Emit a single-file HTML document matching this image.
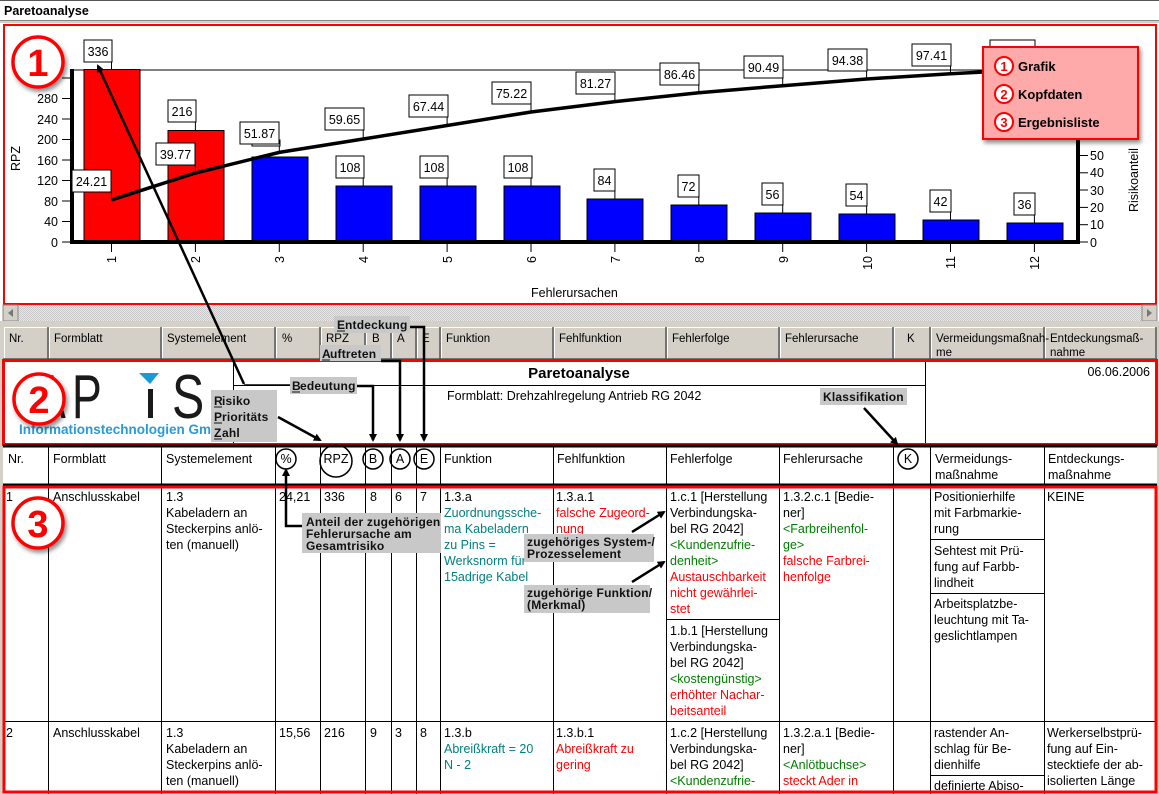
<!DOCTYPE html>
<html><head><meta charset="utf-8"><style>
html,body{margin:0;padding:0;background:#fff;}
#w{position:relative;width:1159px;height:794px;overflow:hidden;background:#fff;}
svg{position:absolute;left:0;top:0;}
text{font-family:"Liberation Sans",sans-serif;}
.t{font-size:12.5px;fill:#000;}
.tl{fill:#008080;}.rd{fill:#f00;}.gr{fill:#008000;}
.ann{font-size:12px;font-weight:bold;fill:#111;letter-spacing:0.2px;}
</style></head><body><div id="w">
<svg width="1159" height="794" viewBox="0 0 1159 794">
<defs>
<filter id="sh" x="-30%" y="-30%" width="160%" height="160%"><feDropShadow dx="2" dy="3" stdDeviation="2" flood-color="#000" flood-opacity="0.45"/></filter>
<marker id="ar" markerWidth="8" markerHeight="8" refX="6" refY="4" orient="auto" markerUnits="userSpaceOnUse"><path d="M0,0 L8,4 L0,8 z" fill="#000"/></marker>
<pattern id="hatch" width="2" height="2" patternUnits="userSpaceOnUse"><rect width="2" height="2" fill="#e8e8e8"/><rect width="1" height="1" fill="#c8c8c8"/><rect x="1" y="1" width="1" height="1" fill="#c8c8c8"/></pattern>
</defs>
<rect x="0" y="0" width="1159" height="1" fill="#555"/>
<text x="4" y="15" style="font-size:12.5px;font-weight:bold">Paretoanalyse</text>
<rect x="0" y="20" width="1159" height="1" fill="#888"/>
<rect x="0" y="21" width="1159" height="2" fill="#d4d0c8"/>
<rect x="4" y="25" width="1152" height="279" fill="#fff" stroke="#f00" stroke-width="2"/>
<line x1="72" y1="70" x2="1078" y2="70" stroke="#000" stroke-width="1"/>
<g stroke="#000" stroke-width="1">
<rect x="84" y="69.5" width="56" height="172.5" fill="#f00"/>
<rect x="168" y="130.5" width="56" height="111.5" fill="#f00"/>
<rect x="252" y="157" width="56" height="85" fill="#00f"/>
<rect x="336" y="186" width="56" height="56" fill="#00f"/>
<rect x="420" y="186" width="56" height="56" fill="#00f"/>
<rect x="504" y="186" width="56" height="56" fill="#00f"/>
<rect x="587" y="199" width="56" height="43" fill="#00f"/>
<rect x="671" y="205" width="56" height="37" fill="#00f"/>
<rect x="755" y="213" width="56" height="29" fill="#00f"/>
<rect x="839" y="214" width="56" height="28" fill="#00f"/>
<rect x="923" y="220" width="56" height="22" fill="#00f"/>
<rect x="1007" y="223" width="56" height="19" fill="#00f"/>
</g>
<rect x="70" y="69" width="4" height="175" fill="#000"/>
<rect x="70" y="240" width="1010" height="4" fill="#000"/>
<rect x="1076" y="69" width="4" height="175" fill="#000"/>
<g stroke="#000" stroke-width="1">
<line x1="62" y1="242" x2="70" y2="242"/><line x1="62" y1="221.5" x2="70" y2="221.5"/><line x1="62" y1="201" x2="70" y2="201"/><line x1="62" y1="180.5" x2="70" y2="180.5"/><line x1="62" y1="160" x2="70" y2="160"/><line x1="62" y1="139.5" x2="70" y2="139.5"/><line x1="62" y1="119" x2="70" y2="119"/><line x1="62" y1="98.5" x2="70" y2="98.5"/><line x1="62" y1="78" x2="70" y2="78"/>
<line x1="1080" y1="242" x2="1088" y2="242"/><line x1="1080" y1="224.7" x2="1088" y2="224.7"/><line x1="1080" y1="207.4" x2="1088" y2="207.4"/><line x1="1080" y1="190" x2="1088" y2="190"/><line x1="1080" y1="172.8" x2="1088" y2="172.8"/><line x1="1080" y1="155.5" x2="1088" y2="155.5"/><line x1="1080" y1="138" x2="1088" y2="138"/>
<line x1="111.5" y1="244" x2="111.5" y2="252"/><line x1="195.4" y1="244" x2="195.4" y2="252"/><line x1="279.3" y1="244" x2="279.3" y2="252"/><line x1="363.2" y1="244" x2="363.2" y2="252"/><line x1="447.1" y1="244" x2="447.1" y2="252"/><line x1="531" y1="244" x2="531" y2="252"/><line x1="614.9" y1="244" x2="614.9" y2="252"/><line x1="698.8" y1="244" x2="698.8" y2="252"/><line x1="782.7" y1="244" x2="782.7" y2="252"/><line x1="866.6" y1="244" x2="866.6" y2="252"/><line x1="950.5" y1="244" x2="950.5" y2="252"/><line x1="1034.4" y1="244" x2="1034.4" y2="252"/>
</g>
<g class="t" text-anchor="end">
<text x="58" y="247">0</text><text x="58" y="226">40</text><text x="58" y="206">80</text><text x="58" y="185">120</text><text x="58" y="165">160</text><text x="58" y="144">200</text><text x="58" y="124">240</text><text x="58" y="103">280</text>
</g>
<g class="t">
<text x="1090" y="247">0</text><text x="1090" y="229">10</text><text x="1090" y="212">20</text><text x="1090" y="195">30</text><text x="1090" y="177">40</text><text x="1090" y="160">50</text>
</g>
<text class="t" transform="translate(20,171) rotate(-90)">RPZ</text>
<text class="t" transform="translate(1138,212) rotate(-90)">Risikoanteil</text>
<g class="t">
<text transform="translate(116,256) rotate(-90)" text-anchor="end">1</text>
<text transform="translate(200,256) rotate(-90)" text-anchor="end">2</text>
<text transform="translate(284,256) rotate(-90)" text-anchor="end">3</text>
<text transform="translate(368,256) rotate(-90)" text-anchor="end">4</text>
<text transform="translate(452,256) rotate(-90)" text-anchor="end">5</text>
<text transform="translate(536,256) rotate(-90)" text-anchor="end">6</text>
<text transform="translate(620,256) rotate(-90)" text-anchor="end">7</text>
<text transform="translate(704,256) rotate(-90)" text-anchor="end">8</text>
<text transform="translate(788,256) rotate(-90)" text-anchor="end">9</text>
<text transform="translate(872,256) rotate(-90)" text-anchor="end">10</text>
<text transform="translate(955,256) rotate(-90)" text-anchor="end">11</text>
<text transform="translate(1039,256) rotate(-90)" text-anchor="end">12</text>
</g>
<text class="t" x="531" y="297">Fehlerursachen</text>
<polyline points="111.5,200 195.4,173 279.3,152.4 363.2,139 447.1,125.5 531,112 614.9,101.6 698.8,92.7 782.7,85.7 866.6,79 950.5,73.8 1034.4,69.3" fill="none" stroke="#000" stroke-width="3.5"/>
<g stroke="#000" stroke-width="1" fill="#fff">
<line x1="111.5" y1="62" x2="111.5" y2="69"/><rect x="84" y="40" width="28" height="22"/>
<line x1="195.4" y1="122" x2="195.4" y2="130"/><rect x="168" y="100" width="28" height="22"/>
<line x1="363.2" y1="178" x2="363.2" y2="186"/><rect x="336" y="156" width="28" height="22"/>
<line x1="447.1" y1="178" x2="447.1" y2="186"/><rect x="420" y="156" width="28" height="22"/>
<line x1="531" y1="178" x2="531" y2="186"/><rect x="504" y="156" width="28" height="22"/>
<line x1="614.9" y1="191" x2="614.9" y2="199"/><rect x="594" y="169" width="21" height="22"/>
<line x1="698.8" y1="197" x2="698.8" y2="205"/><rect x="678" y="175" width="21" height="22"/>
<line x1="782.7" y1="205" x2="782.7" y2="213"/><rect x="762" y="183" width="21" height="22"/>
<line x1="866.6" y1="206" x2="866.6" y2="214"/><rect x="846" y="184" width="21" height="22"/>
<line x1="950.5" y1="212" x2="950.5" y2="220"/><rect x="930" y="190" width="21" height="22"/>
<line x1="1034.4" y1="215" x2="1034.4" y2="223"/><rect x="1014" y="193" width="21" height="22"/>
<line x1="111.5" y1="192" x2="111.5" y2="200"/><rect x="72" y="170" width="39" height="22"/>
<line x1="195.4" y1="165" x2="195.4" y2="173"/><rect x="156" y="143" width="39" height="22"/>
<rect x="252" y="140" width="28" height="6"/><line x1="279.3" y1="146" x2="279.3" y2="152"/><rect x="240" y="122" width="39" height="22"/>
<line x1="363.2" y1="130" x2="363.2" y2="139"/><rect x="325" y="108" width="39" height="22"/>
<line x1="447.1" y1="117" x2="447.1" y2="125"/><rect x="409" y="95" width="39" height="22"/>
<line x1="531" y1="104" x2="531" y2="112"/><rect x="492" y="82" width="39" height="22"/>
<line x1="614.9" y1="94" x2="614.9" y2="101"/><rect x="576" y="72" width="39" height="22"/>
<line x1="698.8" y1="85" x2="698.8" y2="92"/><rect x="660" y="63" width="39" height="22"/>
<line x1="782.7" y1="78" x2="782.7" y2="86"/><rect x="744" y="56" width="39" height="22"/>
<line x1="866.6" y1="71" x2="866.6" y2="79"/><rect x="828" y="49" width="39" height="22"/>
<line x1="950.5" y1="66" x2="950.5" y2="74"/><rect x="912" y="44" width="39" height="22"/>
<rect x="990" y="40" width="45" height="22"/>
</g>
<g class="t" text-anchor="middle">
<text x="98" y="56">336</text><text x="182" y="116">216</text><text x="350" y="172">108</text><text x="434" y="172">108</text><text x="518" y="172">108</text>
<text x="604.5" y="185">84</text><text x="688.5" y="191">72</text><text x="772.5" y="199">56</text><text x="856.5" y="200">54</text><text x="940.5" y="206">42</text><text x="1024.5" y="209">36</text>
<text x="91.5" y="186">24.21</text><text x="175.5" y="159">39.77</text><text x="259.5" y="138">51.87</text><text x="344.5" y="124">59.65</text><text x="428.5" y="111">67.44</text><text x="511.5" y="98">75.22</text><text x="595.5" y="88">81.27</text><text x="679.5" y="79">86.46</text><text x="763.5" y="72">90.49</text><text x="847.5" y="65">94.38</text><text x="931.5" y="60">97.41</text><text x="1012" y="56">100.00</text>
</g>
<rect x="983" y="47" width="155" height="92" fill="#ffaaaa" stroke="#f00" stroke-width="2" filter="url(#sh)"/>
<g stroke="#f00" stroke-width="2" fill="#fff"><circle cx="1004" cy="66" r="9"/><circle cx="1004" cy="94" r="9"/><circle cx="1004" cy="122" r="9"/></g>
<g style="font-size:13px;font-weight:bold" fill="#f00" text-anchor="middle"><text x="1004" y="71">1</text><text x="1004" y="99">2</text><text x="1004" y="127">3</text></g>
<g style="font-size:13px;font-weight:bold" fill="#000"><text x="1018" y="71">Grafik</text><text x="1018" y="99">Kopfdaten</text><text x="1018" y="127">Ergebnisliste</text></g>
<rect x="3" y="305" width="1154" height="16" fill="url(#hatch)"/>
<rect x="3" y="305" width="15" height="16" fill="#d4d0c8" stroke="#888" stroke-width="1"/>
<path d="M13,309 L8,313 L13,317z" fill="#777"/>
<rect x="1142" y="305" width="15" height="16" fill="#d4d0c8" stroke="#888" stroke-width="1"/>
<path d="M1147,309 L1152,313 L1147,317z" fill="#777"/>
<rect x="0" y="321" width="1159" height="6" fill="#d4d0c8"/>
<rect x="0" y="321" width="3" height="473" fill="#d4d0c8"/>
<rect x="1157" y="321" width="2" height="473" fill="#d4d0c8"/>
<rect x="3" y="327" width="1154" height="32" fill="#d4d0c8"/>
<g stroke="#fff" stroke-width="1">
<line x1="4" y1="327.5" x2="1157" y2="327.5"/>
<line x1="4.5" y1="327" x2="4.5" y2="359"/><line x1="49.5" y1="327" x2="49.5" y2="359"/><line x1="162.5" y1="327" x2="162.5" y2="359"/><line x1="276.5" y1="327" x2="276.5" y2="359"/><line x1="321.5" y1="327" x2="321.5" y2="359"/><line x1="366.5" y1="327" x2="366.5" y2="359"/><line x1="392.5" y1="327" x2="392.5" y2="359"/><line x1="417.5" y1="327" x2="417.5" y2="359"/><line x1="441.5" y1="327" x2="441.5" y2="359"/><line x1="554.5" y1="327" x2="554.5" y2="359"/><line x1="667.5" y1="327" x2="667.5" y2="359"/><line x1="780.5" y1="327" x2="780.5" y2="359"/><line x1="894.5" y1="327" x2="894.5" y2="359"/><line x1="931.5" y1="327" x2="931.5" y2="359"/><line x1="1045.5" y1="327" x2="1045.5" y2="359"/>
</g>
<g stroke="#555" stroke-width="1.5">
<line x1="48" y1="327" x2="48" y2="359"/><line x1="161" y1="327" x2="161" y2="359"/><line x1="275" y1="327" x2="275" y2="359"/><line x1="320" y1="327" x2="320" y2="359"/><line x1="365" y1="327" x2="365" y2="359"/><line x1="391" y1="327" x2="391" y2="359"/><line x1="416" y1="327" x2="416" y2="359"/><line x1="440" y1="327" x2="440" y2="359"/><line x1="553" y1="327" x2="553" y2="359"/><line x1="666" y1="327" x2="666" y2="359"/><line x1="779" y1="327" x2="779" y2="359"/><line x1="893" y1="327" x2="893" y2="359"/><line x1="930" y1="327" x2="930" y2="359"/><line x1="1044" y1="327" x2="1044" y2="359"/><line x1="1156" y1="327" x2="1156" y2="359"/>
<line x1="3" y1="359" x2="1157" y2="359"/>
</g>
<g style="font-size:11.5px" fill="#000">
<text x="9" y="342">Nr.</text><text x="54" y="342">Formblatt</text><text x="167" y="342">Systemelement</text><text x="282" y="342">%</text><text x="326" y="342">RPZ</text><text x="372" y="342">B</text><text x="397" y="342">A</text><text x="422" y="342">E</text><text x="446" y="342">Funktion</text><text x="559" y="342">Fehlfunktion</text><text x="672" y="342">Fehlerfolge</text><text x="785" y="342">Fehlerursache</text><text x="907" y="342">K</text><text x="936" y="342">Vermeidungsmaßnah-</text><text x="936" y="356">me</text><text x="1050" y="342">Entdeckungsmaß-</text><text x="1050" y="356">nahme</text>
</g>
<rect x="3" y="360" width="1154" height="86" fill="#fff"/>
<line x1="233.5" y1="361" x2="233.5" y2="444" stroke="#000"/>
<line x1="925.5" y1="361" x2="925.5" y2="444" stroke="#000"/>
<line x1="233" y1="385.5" x2="925" y2="385.5" stroke="#000"/>
<text x="579" y="378" text-anchor="middle" style="font-size:15px;font-weight:bold">Paretoanalyse</text>
<text class="t" x="447" y="400">Formblatt: Drehzahlregelung Antrieb RG 2042</text>
<text class="t" x="1150" y="376" text-anchor="end">06.06.2006</text>
<!-- logo -->
<g fill="#1a1a1a" style="font-size:62px;font-weight:normal">
<text transform="translate(36,418) scale(0.72,1)">A</text>
<text transform="translate(72,418) scale(0.72,1)">P</text>
<text transform="translate(172,418) scale(0.78,1)">S</text>
</g>
<rect x="148" y="389" width="5" height="29" fill="#1a1a1a"/>
<path d="M139,373 L159,373 L150,384 z" fill="#1a9ad6"/>
<text x="19" y="434" style="font-size:13.5px;font-weight:bold" fill="#2a9ad6">Informationstechnologien GmbH</text>
<rect x="3.5" y="360.5" width="1153" height="84" fill="none" stroke="#f00" stroke-width="3"/>
<rect x="3" y="446" width="1154" height="39" fill="#fff"/>
<line x1="3" y1="446" x2="1157" y2="446" stroke="#000" stroke-width="3"/>
<line x1="3" y1="485" x2="1157" y2="485" stroke="#000" stroke-width="3"/>
<g style="font-size:12.5px" fill="#000">
<text x="8" y="463">Nr.</text><text x="53" y="463">Formblatt</text><text x="166" y="463">Systemelement</text><text x="444" y="463">Funktion</text><text x="557" y="463">Fehlfunktion</text><text x="670" y="463">Fehlerfolge</text><text x="783" y="463">Fehlerursache</text><text x="935" y="463">Vermeidungs-</text><text x="935" y="479">maßnahme</text><text x="1048" y="463">Entdeckungs-</text><text x="1048" y="479">maßnahme</text>
<text x="286" y="463" text-anchor="middle">%</text><text x="336" y="463" text-anchor="middle">RPZ</text><text x="373" y="463" text-anchor="middle">B</text><text x="400" y="463" text-anchor="middle">A</text><text x="424" y="463" text-anchor="middle">E</text><text x="908" y="463" text-anchor="middle">K</text>
</g>
<g fill="none" stroke="#000" stroke-width="1.5">
<circle cx="286" cy="459" r="10"/><circle cx="336" cy="461" r="16"/><circle cx="373" cy="459" r="10"/><circle cx="400" cy="459" r="10"/><circle cx="424" cy="459" r="10"/><circle cx="908" cy="459" r="10"/>
</g>
<g stroke="#000" stroke-width="1">
<line x1="48.5" y1="446" x2="48.5" y2="794"/><line x1="161.5" y1="446" x2="161.5" y2="794"/><line x1="275.5" y1="446" x2="275.5" y2="794"/><line x1="320.5" y1="446" x2="320.5" y2="794"/><line x1="365.5" y1="446" x2="365.5" y2="794"/><line x1="391.5" y1="446" x2="391.5" y2="794"/><line x1="416.5" y1="446" x2="416.5" y2="794"/><line x1="440.5" y1="446" x2="440.5" y2="794"/><line x1="553.5" y1="446" x2="553.5" y2="794"/><line x1="666.5" y1="446" x2="666.5" y2="794"/><line x1="779.5" y1="446" x2="779.5" y2="794"/><line x1="893.5" y1="446" x2="893.5" y2="794"/><line x1="930.5" y1="446" x2="930.5" y2="794"/><line x1="1044.5" y1="446" x2="1044.5" y2="794"/>
<line x1="3" y1="721.5" x2="1157" y2="721.5"/>
<line x1="666" y1="619.5" x2="779" y2="619.5"/>
<line x1="930" y1="539.5" x2="1044" y2="539.5"/><line x1="930" y1="593.5" x2="1044" y2="593.5"/><line x1="930" y1="775.5" x2="1044" y2="775.5"/>
</g>
<g class="t">
<text x="6" y="501">1</text><text x="53" y="501">Anschlusskabel</text>
<text x="166" y="501">1.3</text><text x="166" y="517">Kabeladern an</text><text x="166" y="533">Steckerpins anlö-</text><text x="166" y="549">ten (manuell)</text>
<text x="279" y="501">24,21</text><text x="324" y="501">336</text><text x="370" y="501">8</text><text x="395" y="501">6</text><text x="420" y="501">7</text>
<text x="444" y="501">1.3.a</text>
<text class="tl" x="444" y="517">Zuordnungssche-</text><text class="tl" x="444" y="533">ma Kabeladern</text><text class="tl" x="444" y="549">zu Pins =</text><text class="tl" x="444" y="565">Werksnorm für</text><text class="tl" x="444" y="581">15adrige Kabel</text>
<text x="556" y="501">1.3.a.1</text><text class="rd" x="556" y="517">falsche Zugeord-</text><text class="rd" x="556" y="533">nung</text>
<text x="670" y="501">1.c.1 [Herstellung</text><text x="670" y="517">Verbindungska-</text><text x="670" y="533">bel RG 2042]</text><text class="gr" x="670" y="549">&lt;Kundenzufrie-</text><text class="gr" x="670" y="565">denheit&gt;</text><text class="rd" x="670" y="581">Austauschbarkeit</text><text class="rd" x="670" y="597">nicht gewährlei-</text><text class="rd" x="670" y="613">stet</text>
<text x="670" y="635">1.b.1 [Herstellung</text><text x="670" y="651">Verbindungska-</text><text x="670" y="667">bel RG 2042]</text><text class="gr" x="670" y="683">&lt;kostengünstig&gt;</text><text class="rd" x="670" y="699">erhöhter Nachar-</text><text class="rd" x="670" y="715">beitsanteil</text>
<text x="783" y="501">1.3.2.c.1 [Bedie-</text><text x="783" y="517">ner]</text><text class="gr" x="783" y="533">&lt;Farbreihenfol-</text><text class="gr" x="783" y="549">ge&gt;</text><text class="rd" x="783" y="565">falsche Farbrei-</text><text class="rd" x="783" y="581">henfolge</text>
<text x="934" y="501">Positionierhilfe</text><text x="934" y="517">mit Farbmarkie-</text><text x="934" y="533">rung</text>
<text x="934" y="555">Sehtest mit Prü-</text><text x="934" y="571">fung auf Farbb-</text><text x="934" y="587">lindheit</text>
<text x="934" y="608">Arbeitsplatzbe-</text><text x="934" y="624">leuchtung mit Ta-</text><text x="934" y="640">geslichtlampen</text>
<text x="1047" y="501">KEINE</text>
<text x="6" y="737">2</text><text x="53" y="737">Anschlusskabel</text>
<text x="166" y="737">1.3</text><text x="166" y="753">Kabeladern an</text><text x="166" y="769">Steckerpins anlö-</text><text x="166" y="785">ten (manuell)</text>
<text x="279" y="737">15,56</text><text x="324" y="737">216</text><text x="370" y="737">9</text><text x="395" y="737">3</text><text x="420" y="737">8</text>
<text x="444" y="737">1.3.b</text><text class="tl" x="444" y="753">Abreißkraft = 20</text><text class="tl" x="444" y="769">N - 2</text>
<text x="556" y="737">1.3.b.1</text><text class="rd" x="556" y="753">Abreißkraft zu</text><text class="rd" x="556" y="769">gering</text>
<text x="670" y="737">1.c.2 [Herstellung</text><text x="670" y="753">Verbindungska-</text><text x="670" y="769">bel RG 2042]</text><text class="gr" x="670" y="785">&lt;Kundenzufrie-</text>
<text x="783" y="737">1.3.2.a.1 [Bedie-</text><text x="783" y="753">ner]</text><text class="gr" x="783" y="769">&lt;Anlötbuchse&gt;</text><text class="rd" x="783" y="785">steckt Ader in</text>
<text x="934" y="737">rastender An-</text><text x="934" y="753">schlag für Be-</text><text x="934" y="769">dienhilfe</text><text x="934" y="790">definierte Abiso-</text>
<text x="1047" y="737">Werkerselbstprü-</text><text x="1047" y="753">fung auf Ein-</text><text x="1047" y="769">stecktiefe der ab-</text><text x="1047" y="785">isolierten Länge</text>
</g>
<rect x="4" y="487" width="1152" height="305" fill="none" stroke="#f00" stroke-width="3"/>
<g stroke="#000" stroke-width="2.5" fill="none">
<line x1="244" y1="384" x2="98" y2="66" marker-end="url(#ar)"/>
<line x1="244" y1="385" x2="290" y2="385" stroke-width="1.5"/>
<polyline points="357,386 373,386 373,440" marker-end="url(#ar)"/>
<polyline points="381,361 400,361 400,440" marker-end="url(#ar)"/>
<polyline points="410,327 424,327 424,440" marker-end="url(#ar)"/>
<line x1="278" y1="417" x2="320" y2="440" marker-end="url(#ar)"/>
<line x1="864" y1="408" x2="897" y2="444" marker-end="url(#ar)"/>
<polyline points="302,526 286,526 286,470" marker-end="url(#ar)"/>
<line x1="632" y1="532" x2="664" y2="512" marker-end="url(#ar)"/>
<line x1="632" y1="582" x2="664" y2="562" marker-end="url(#ar)"/>
</g>
<g fill="#c8c8c8">
<rect x="334" y="316" width="76" height="17"/>
<rect x="320" y="345" width="61" height="16"/>
<rect x="290" y="377" width="67" height="17"/>
<rect x="211" y="390" width="66" height="52"/>
<rect x="820" y="388" width="87" height="17"/>
<rect x="302" y="513" width="139" height="40"/>
<rect x="524" y="534" width="130" height="28"/>
<rect x="524" y="585" width="126" height="28"/>
</g>
<g class="ann">
<text x="337" y="329">E</text><text x="345" y="329">ntdeckung</text>
<text x="322" y="358">A</text><text x="330" y="358">uftreten</text>
<text x="292" y="390">B</text><text x="300" y="390">edeutung</text>
<text x="214" y="405">R</text><text x="222" y="405">isiko</text>
<text x="214" y="421">P</text><text x="222" y="421">rioritäts</text>
<text x="214" y="437">Z</text><text x="222" y="437">ahl</text>
<text x="823" y="401">Klassifikation</text>
<text x="306" y="526">Anteil der zugehörigen</text><text x="306" y="538">Fehlerursache am</text><text x="306" y="550">Gesamtrisiko</text>
<text x="527" y="546">zugehöriges System-/</text><text x="527" y="558">Prozesselement</text>
<text x="527" y="597">zugehörige Funktion/</text><text x="527" y="609">(Merkmal)</text>
</g>
<g stroke="#111" stroke-width="1">
<line x1="337" y1="331" x2="345" y2="331"/><line x1="322" y1="360" x2="330" y2="360"/><line x1="292" y1="392" x2="300" y2="392"/><line x1="214" y1="407" x2="222" y2="407"/><line x1="214" y1="423" x2="222" y2="423"/><line x1="214" y1="439" x2="222" y2="439"/>
</g>
<g filter="url(#sh)">
<circle cx="38" cy="62" r="25" fill="#fff" stroke="#f00" stroke-width="3.5"/>
<circle cx="39" cy="399" r="25" fill="#fff" stroke="#f00" stroke-width="3.5"/>
<circle cx="38" cy="523" r="25" fill="#fff" stroke="#f00" stroke-width="3.5"/>
</g>
<g fill="#f00" text-anchor="middle" style="font-size:38px;font-weight:bold">
<text x="38" y="76">1</text><text x="39" y="413">2</text><text x="38" y="537">3</text>
</g>
</svg>
</div></body></html>
